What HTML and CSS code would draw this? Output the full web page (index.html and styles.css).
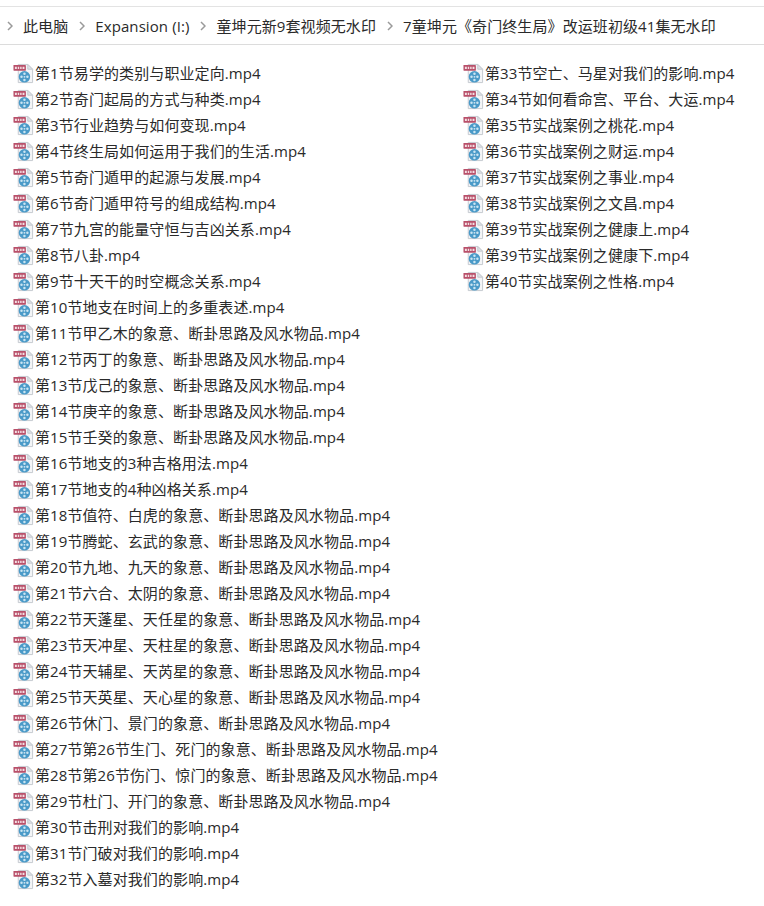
FILE: index.html
```html
<!DOCTYPE html>
<html>

	<head>
		<meta charset="UTF-8">
		<title>7童坤元《奇门终生局》改运班初级41集无水印</title>
		<link rel="stylesheet" href="styles.css">
	</head>

	<body>
		<svg class="defs" width="0" height="0">
			<symbol id="mp4" viewBox="0 0 22 22">
				<path d="M5.5 1.5H15.5L20.5 6.5V20.5H5.5Z" fill="#f4f5f7" stroke="#c3c8cf" />
				<path d="M15.5 1.5V6.5H20.5Z" fill="#dfe3e8" stroke="#c3c8cf" />
				<rect x="0.5" y="2" width="13" height="6" rx="0.5" fill="#b8506a" />
				<path d="M2 3.8h2v2.4H2zM5 3.8h1.5v2.4H5zM7.5 3.8h1.5v2.4H7.5zM10 3.8h2v2.4h-2z" fill="#f3dfe3" />
				<circle cx="12" cy="14.5" r="6" fill="#4a9ac8" />
				<circle cx="12" cy="14.5" r="1" fill="#cfe6f2" />
				<circle cx="12" cy="11.3" r="1.3" fill="#cbe5f2" />
				<circle cx="12" cy="17.7" r="1.3" fill="#cbe5f2" />
				<circle cx="8.9" cy="14.5" r="1.3" fill="#cbe5f2" />
				<circle cx="15.1" cy="14.5" r="1.3" fill="#cbe5f2" />
			</symbol>
		</svg>

		<div class="crumbs">
			<svg class="sep" viewBox="0 0 6 10"><path d="M1 1l4 4-4 4" /></svg>
			<span>此电脑</span>
			<svg class="sep" viewBox="0 0 6 10"><path d="M1 1l4 4-4 4" /></svg>
			<span>Expansion (I:)</span>
			<svg class="sep" viewBox="0 0 6 10"><path d="M1 1l4 4-4 4" /></svg>
			<span>童坤元新9套视频无水印</span>
			<svg class="sep" viewBox="0 0 6 10"><path d="M1 1l4 4-4 4" /></svg>
			<span>7童坤元《奇门终生局》改运班初级41集无水印</span>
		</div>

		<ul class="files" id="files"></ul>

		<script src="list.js"></script>
	</body>

</html>
```

FILE: styles.css
```css
* {
	margin: 0;
	padding: 0;
	box-sizing: border-box;
}

body {
	width: 764px;
	height: 906px;
	overflow: hidden;
	background: #fff;
	color: #2a2a2a;
	font-family: "Open Sans", "Noto Sans CJK SC", sans-serif;
	font-size: 15px;
	letter-spacing: 0.09px;
	padding-top: 6px;
}

.defs {
	position: absolute;
}

.crumbs {
	height: 39px;
	border-top: 1px solid #e3e3e3;
	border-bottom: 1px solid #dcdcdc;
	display: flex;
	align-items: center;
	padding-left: 7px;
	white-space: nowrap;
}

.crumbs span {
	margin: 0 11px 0 10px;
	line-height: 20px;
}

.sep {
	width: 6px;
	height: 10px;
	flex: none;
}

.sep path {
	fill: none;
	stroke: #9a9a9a;
	stroke-width: 1.5;
}

.files {
	list-style: none;
	display: grid;
	grid-auto-flow: column;
	grid-template-rows: repeat(32, 26px);
	grid-template-columns: 450px 1fr;
	padding: 15px 0 0 13px;
}

.files li {
	display: flex;
	align-items: center;
	gap: 1px;
	white-space: nowrap;
	line-height: 26px;
}

.files svg {
	width: 21px;
	height: 21px;
	flex: none;
}
```

FILE: list.js
```js
var names = [
	'第1节易学的类别与职业定向', '第2节奇门起局的方式与种类', '第3节行业趋势与如何变现',
	'第4节终生局如何运用于我们的生活', '第5节奇门遁甲的起源与发展', '第6节奇门遁甲符号的组成结构',
	'第7节九宫的能量守恒与吉凶关系', '第8节八卦', '第9节十天干的时空概念关系',
	'第10节地支在时间上的多重表述', '第11节甲乙木的象意、断卦思路及风水物品', '第12节丙丁的象意、断卦思路及风水物品',
	'第13节戊己的象意、断卦思路及风水物品', '第14节庚辛的象意、断卦思路及风水物品', '第15节壬癸的象意、断卦思路及风水物品',
	'第16节地支的3种吉格用法', '第17节地支的4种凶格关系', '第18节值符、白虎的象意、断卦思路及风水物品',
	'第19节腾蛇、玄武的象意、断卦思路及风水物品', '第20节九地、九天的象意、断卦思路及风水物品', '第21节六合、太阴的象意、断卦思路及风水物品',
	'第22节天蓬星、天任星的象意、断卦思路及风水物品', '第23节天冲星、天柱星的象意、断卦思路及风水物品', '第24节天辅星、天芮星的象意、断卦思路及风水物品',
	'第25节天英星、天心星的象意、断卦思路及风水物品', '第26节休门、景门的象意、断卦思路及风水物品', '第27节第26节生门、死门的象意、断卦思路及风水物品',
	'第28节第26节伤门、惊门的象意、断卦思路及风水物品', '第29节杜门、开门的象意、断卦思路及风水物品', '第30节击刑对我们的影响',
	'第31节门破对我们的影响', '第32节入墓对我们的影响', '第33节空亡、马星对我们的影响',
	'第34节如何看命宫、平台、大运', '第35节实战案例之桃花', '第36节实战案例之财运',
	'第37节实战案例之事业', '第38节实战案例之文昌', '第39节实战案例之健康上',
	'第39节实战案例之健康下', '第40节实战案例之性格'
];

var files = document.getElementById('files');
for (var i = 0; i < names.length; i++) {
	var li = document.createElement('li');
	li.innerHTML = '<svg><use href="#mp4"></use></svg><span>' + names[i] + '.mp4</span>';
	files.appendChild(li);
}
```
